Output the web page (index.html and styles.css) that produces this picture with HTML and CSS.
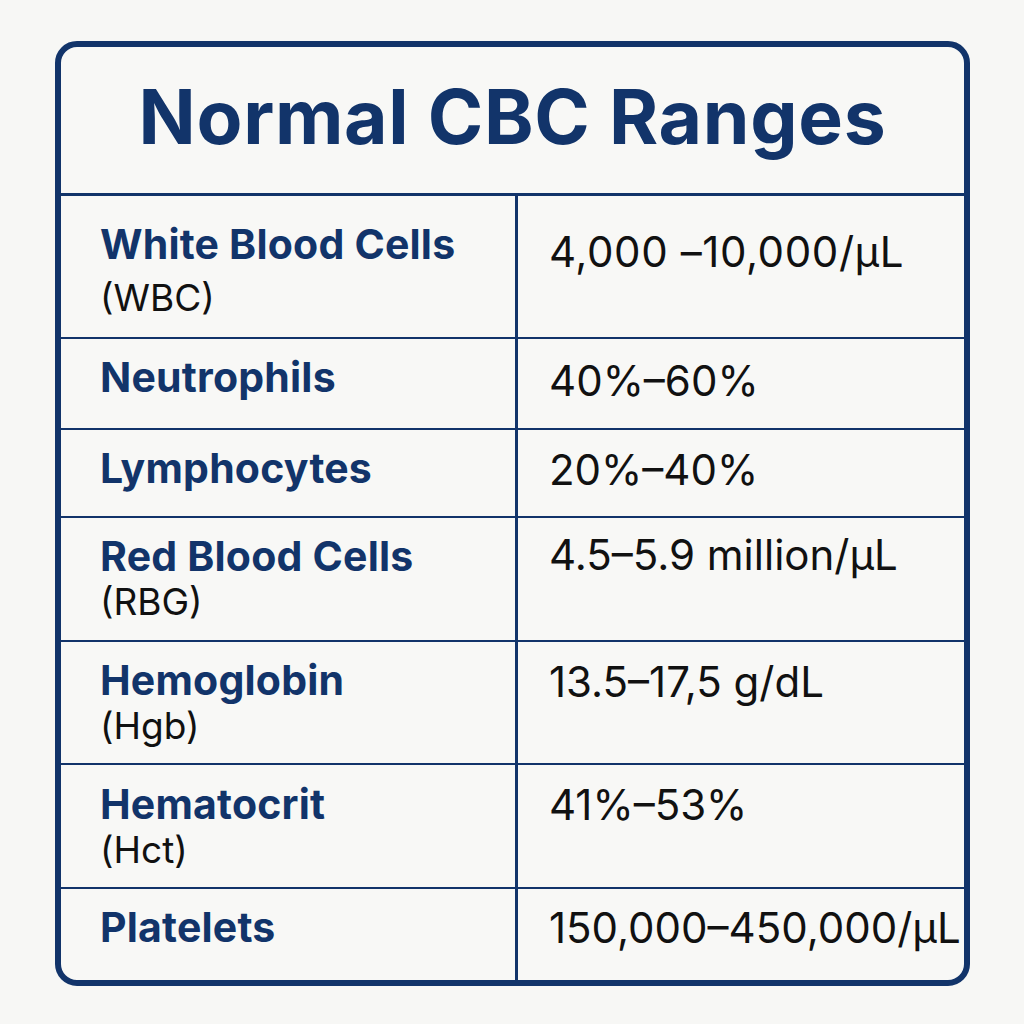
FILE: index.html
```html
<!DOCTYPE html>
<html lang="en">
<head>
<meta charset="utf-8">
<title>Normal CBC Ranges</title>
<link rel="stylesheet" href="styles.css">
</head>
<body>
<div class="card">
  <header class="card-header">
    <h1 class="title">Normal CBC Ranges</h1>
  </header>
  <div class="row row-1">
    <div class="label"><span class="name">White Blood Cells</span><span class="abbr">(WBC)</span></div>
    <div class="value">4,000 –10,000/μL</div>
  </div>
  <div class="row row-2">
    <div class="label"><span class="name">Neutrophils</span></div>
    <div class="value">40%–60%</div>
  </div>
  <div class="row row-3">
    <div class="label"><span class="name">Lymphocytes</span></div>
    <div class="value">20%–40%</div>
  </div>
  <div class="row row-4">
    <div class="label"><span class="name">Red Blood Cells</span><span class="abbr">(RBG)</span></div>
    <div class="value">4.5–5.9 million/μL</div>
  </div>
  <div class="row row-5">
    <div class="label"><span class="name">Hemoglobin</span><span class="abbr">(Hgb)</span></div>
    <div class="value">13.5–17,5 g/dL</div>
  </div>
  <div class="row row-6">
    <div class="label"><span class="name">Hematocrit</span><span class="abbr">(Hct)</span></div>
    <div class="value">41%–53%</div>
  </div>
  <div class="row row-7">
    <div class="label"><span class="name">Platelets</span></div>
    <div class="value">150,000–450,000/μL</div>
  </div>
</div>
</body>
</html>
```
FILE: styles.css
```css
* { box-sizing: border-box; }

html, body {
  margin: 0;
  padding: 0;
  background: #f7f7f5;
}

body {
  font-family: Inter, "Noto Sans", "Liberation Sans", sans-serif;
  color: #111;
}

.card {
  margin: 41px 0 0 55px;
  width: 915px;
  height: 945px;
  border: 6px solid #12346a;
  border-radius: 22px;
  background: #f8f8f6;
  overflow: hidden;
  display: flex;
  flex-direction: column;
}

.card-header {
  height: 149px;
  border-bottom: 3px solid #12346a;
  display: flex;
  justify-content: center;
  padding-top: 24px;
}

.title {
  margin: 0;
  font-size: 75px;
  line-height: 92px;
  font-weight: 700;
  color: #12346a;
  letter-spacing: 0.7px;
}

.row {
  display: grid;
  grid-template-columns: 457px 1fr;
  border-bottom: 2px solid #12346a;
}

.row:last-child { border-bottom: none; flex: 1; }

.row-1 { height: 143px; }
.row-2 { height: 91px; }
.row-3 { height: 88px; }
.row-4 { height: 124px; }
.row-5 { height: 123px; }
.row-6 { height: 124px; }
.row-7 { height: 91px; }

.label {
  border-right: 3px solid #12346a;
  padding: 14px 0 0 39px;
  display: flex;
  flex-direction: column;
}

.name {
  font-size: 41px;
  line-height: 48px;
  font-weight: 700;
  color: #12346a;
  letter-spacing: 0.2px;
}

.abbr {
  font-size: 37px;
  line-height: 44px;
  font-weight: 400;
  color: #111;
}

.value {
  padding: 16px 0 0 31px;
  font-size: 42px;
  line-height: 48px;
  font-weight: 400;
  color: #111;
  white-space: nowrap;
}

.gap { margin-left: 6px; }

.row-1 .label { padding-top: 24px; }
.row-1 .abbr { line-height: 60px; }
.row-1 .value { padding-top: 32px; letter-spacing: 0.6px; }
.row-2 .value { padding-top: 18px; }
.row-4 .value { padding-top: 13px; }
.row-6 .label { padding-top: 15px; }
.row-7 .value { padding-top: 15px; }
```
